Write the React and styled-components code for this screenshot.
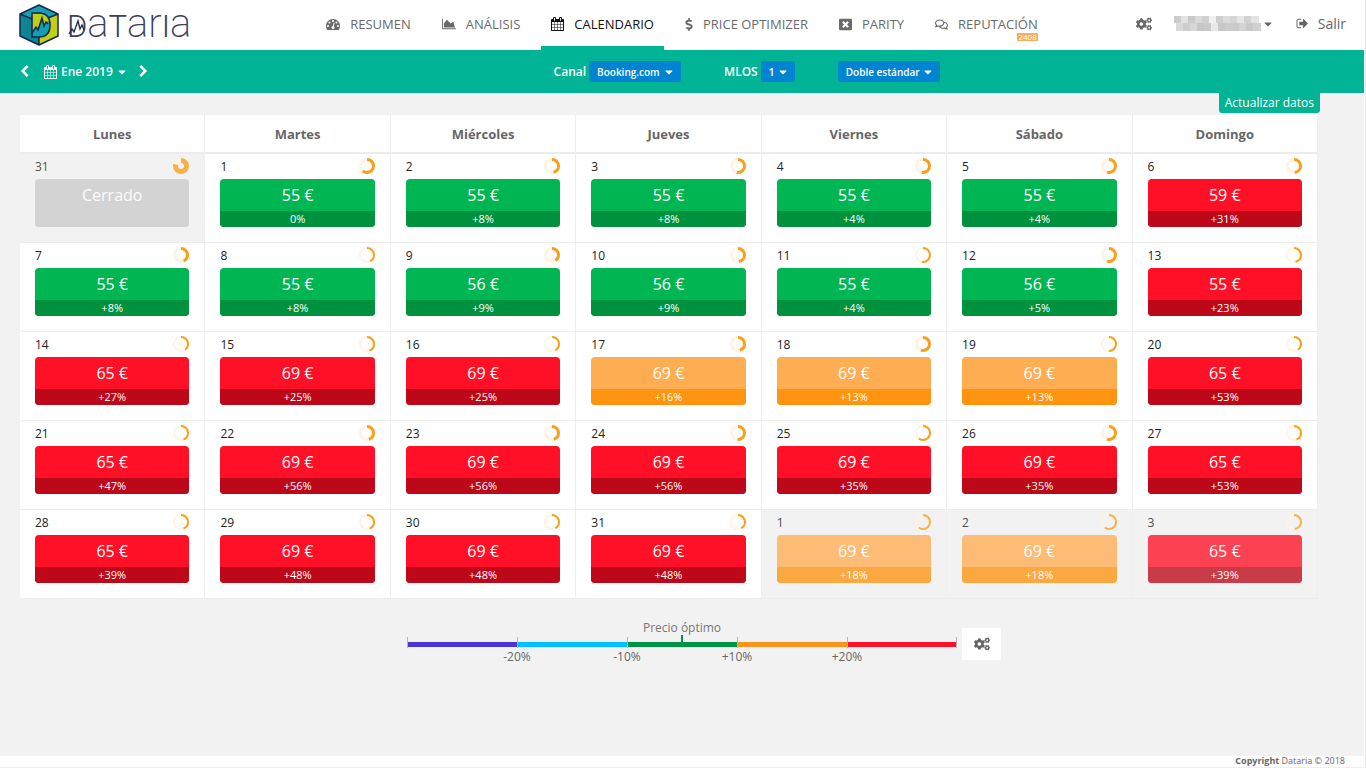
import React, { useState } from "react";
import styled, { createGlobalStyle } from "styled-components";
import {
  FaCaretDown,
  FaCogs,
  FaDollarSign,
  FaRegComments,
  FaWindowClose,
} from "react-icons/fa";

const weekDays = ["Lunes", "Martes", "Miércoles", "Jueves", "Viernes", "Sábado", "Domingo"];

// [day, price, difference, level, ring fill, ring thickness, other month]
const weeks = [
  [
    [31, null, null, "closed", 78, 5, true],
    [1, 55, "0%", "good", 60, 3],
    [2, 55, "+8%", "good", 45, 3],
    [3, 55, "+8%", "good", 52, 3],
    [4, 55, "+4%", "good", 52, 3],
    [5, 55, "+4%", "good", 54, 3],
    [6, 59, "+31%", "high", 47, 3],
  ],
  [
    [7, 55, "+8%", "good", 42, 3],
    [8, 55, "+8%", "good", 42, 2],
    [9, 56, "+9%", "good", 40, 3],
    [10, 56, "+9%", "good", 46, 3],
    [11, 55, "+4%", "good", 52, 2],
    [12, 56, "+5%", "good", 54, 3],
    [13, 55, "+23%", "high", 46, 2],
  ],
  [
    [14, 65, "+27%", "high", 40, 2],
    [15, 69, "+25%", "high", 44, 2],
    [16, 69, "+25%", "high", 42, 2],
    [17, 69, "+16%", "warn", 44, 3],
    [18, 69, "+13%", "warn", 54, 3],
    [19, 69, "+13%", "warn", 50, 2],
    [20, 65, "+53%", "high", 40, 2],
  ],
  [
    [21, 65, "+47%", "high", 44, 2],
    [22, 69, "+56%", "high", 44, 3],
    [23, 69, "+56%", "high", 44, 3],
    [24, 69, "+56%", "high", 50, 3],
    [25, 69, "+35%", "high", 60, 2],
    [26, 69, "+35%", "high", 54, 3],
    [27, 65, "+53%", "high", 44, 2],
  ],
  [
    [28, 65, "+39%", "high", 44, 2],
    [29, 69, "+48%", "high", 44, 2],
    [30, 69, "+48%", "high", 42, 2],
    [31, 69, "+48%", "high", 42, 2],
    [1, 69, "+18%", "warn", 60, 2, true],
    [2, 69, "+18%", "warn", 60, 2, true],
    [3, 65, "+39%", "high", 48, 2, true],
  ],
];

const levels = {
  good: { top: "#00b652", bottom: "#00913f" },
  warn: { top: "#ffad52", bottom: "#ff9410" },
  high: { top: "#ff1026", bottom: "#bd0819" },
  closed: { top: "#cbcbcb", bottom: "#cbcbcb" },
};

const scale = [
  { color: "#4b35d6", label: "-20%" },
  { color: "#00bfff", label: "-10%" },
  { color: "#009245", label: "+10%" },
  { color: "#f7931e", label: "+20%" },
  { color: "#fb1026", label: "" },
];

// grey levels of the masked user name, two rows of blocks
const mask = [
  ["#ccc", "#e2e2e2", "#c9c9c9", "#dadada", "#d0d0d0", "#f1f1f1", "#cfcfcf", "#dcdcdc", "#d5d5d5", "#e6e6e6", "#d2d2d2", "#e3e3e3"],
  ["#d9d9d9", "#cdcdcd", "#d6d6d6", "#c6c6c6", "#c9c9c9", "#e9e9e9", "#c8c8c8", "#cbcbcb", "#cacaca", "#d4d4d4", "#c9c9c9", "#d0d0d0"],
];

function DashboardIcon() {
  return (
    <svg viewBox="0 0 1792 1792" width="14" height="14" fill="currentColor" aria-hidden="true">
      <path d="M384 1152q0-53-37.5-90.5t-90.5-37.5-90.5 37.5-37.5 90.5 37.5 90.5 90.5 37.5 90.5-37.5 37.5-90.5zm192-448q0-53-37.5-90.5t-90.5-37.5-90.5 37.5-37.5 90.5 37.5 90.5 90.5 37.5 90.5-37.5 37.5-90.5zm428 481l101-382q6-26-7.5-48.5t-38.5-29.5-48 6.5-30 39.5l-101 382q-60 5-107 43.5t-63 98.5q-20 77 20 146t117 89 146-20 89-117q16-60-6-117t-72-91zm660-33q0-53-37.5-90.5t-90.5-37.5-90.5 37.5-37.5 90.5 37.5 90.5 90.5 37.5 90.5-37.5 37.5-90.5zm-640-640q0-53-37.5-90.5t-90.5-37.5-90.5 37.5-37.5 90.5 37.5 90.5 90.5 37.5 90.5-37.5 37.5-90.5zm448 192q0-53-37.5-90.5t-90.5-37.5-90.5 37.5-37.5 90.5 37.5 90.5 90.5 37.5 90.5-37.5 37.5-90.5zm320 448q0 261-141 483-19 29-54 29h-1402q-35 0-54-29-141-221-141-483 0-182 71-348t191-286 286-191 348-71 348 71 286 191 191 286 71 348z" />
    </svg>
  );
}

function AreaIcon() {
  return (
    <svg viewBox="0 0 2048 1792" width="14" height="12" fill="currentColor" aria-hidden="true">
      <path d="M2048 1536v128h-2048v-1536h128v1408h1920zm-384-1024l256 896h-1664v-576l448-576 576 576z" />
    </svg>
  );
}

function CalendarIcon() {
  return (
    <svg viewBox="64 0 1664 1792" width="13" height="14" fill="currentColor" aria-hidden="true">
      <path d="M192 1664h288v-288h-288v288zm352 0h320v-288h-320v288zm-352-352h288v-320h-288v320zm352 0h320v-320h-320v320zm-352-384h288v-288h-288v288zm736 736h320v-288h-320v288zm-384-736h320v-288h-320v288zm768 736h288v-288h-288v288zm-384-352h320v-320h-320v320zm-352-864v-288q0-13-9.5-22.5t-22.5-9.5h-64q-13 0-22.5 9.5t-9.5 22.5v288q0 13 9.5 22.5t22.5 9.5h64q13 0 22.5-9.5t9.5-22.5zm736 864h288v-320h-288v320zm-384-384h320v-288h-320v288zm384 0h288v-288h-288v288zm32-480v-288q0-13-9.5-22.5t-22.5-9.5h-64q-13 0-22.5 9.5t-9.5 22.5v288q0 13 9.5 22.5t22.5 9.5h64q13 0 22.5-9.5t9.5-22.5zm384-64v1280q0 52-38 90t-90 38h-1408q-52 0-90-38t-38-90v-1280q0-52 38-90t90-38h128v-96q0-66 47-113t113-47h64q66 0 113 47t47 113v96h384v-96q0-66 47-113t113-47h64q66 0 113 47t47 113v96h128q52 0 90 38t38 90z" />
    </svg>
  );
}

function SignOutIcon() {
  return (
    <svg viewBox="0 0 1792 1792" width="13" height="13" fill="currentColor" aria-hidden="true">
      <path d="M704 1440q0 4 1 20t.5 26.5-3 23.5-10 19.5-20.5 6.5h-320q-119 0-203.5-84.5t-84.5-203.5v-704q0-119 84.5-203.5t203.5-84.5h320q13 0 22.5 9.5t9.5 22.5q0 4 1 20t.5 26.5-3 23.5-10 19.5-20.5 6.5h-320q-66 0-113 47t-47 113v704q0 66 47 113t113 47h312l11.5 1 11.5 3 8 5.5 7 9 2 13.5zm928-544q0 26-19 45l-544 544q-19 19-45 19t-45-19-19-45v-288h-448q-26 0-45-19t-19-45v-384q0-26 19-45t45-19h448v-288q0-26 19-45t45-19 45 19l544 544q19 19 19 45z" />
    </svg>
  );
}

function ChevronIcon({ right }) {
  return (
    <svg viewBox="300 0 1200 1792" width="9" height="13" fill="currentColor" aria-hidden="true">
      <path
        d={
          right
            ? "M1363 877l-742 742q-19 19-45 19t-45-19l-166-166q-19-19-19-45t19-45l531-531-531-531q-19-19-19-45t19-45l166-166q19-19 45-19t45 19l742 742q19 19 19 45t-19 45z"
            : "M1427 301l-531 531 531 531q19 19 19 45t-19 45l-166 166q-19 19-45 19t-45-19l-742-742q-19-19-19-45t19-45l742-742q19-19 45-19t45 19l166 166q19 19 19 45t-19 45z"
        }
      />
    </svg>
  );
}

function CubeLogo() {
  return (
    <svg viewBox="0 0 42 42" width="42" height="42" aria-hidden="true">
      <path d="M21 1 40 10 21 19 2 10z" fill="#12a0b4" />
      <path d="M2 10 21 19V41L2 32z" fill="#0d8593" />
      <path d="M40 10 21 19V41L40 32z" fill="#c3cf14" />
      <path d="M14 10H21C26 10 29 12 30 15L28 18 26 22 24 14 20 26 18 23 14 29z" fill="#c3cf14" />
      <path d="M14 29 18 23 20 26 24 14 26 22 28 18 31 17C33 26 29 33 21 33H14z" fill="#12a0b4" />
      <path d="M14 9H21C29 9 32 14 32 21S29 33 21 33H14z" fill="none" stroke="#17274f" strokeWidth="1.6" />
      <path d="M14 29 18 23 20 26 24 14 26 22 28 18 30 20" fill="none" stroke="#17274f" strokeWidth="1.5" />
      <path d="M21 1 40 10V32L21 41 2 32V10zM2 10l12 5M40 10l-10 4M21 33v8" fill="none" stroke="#17274f" strokeWidth="1.5" strokeLinejoin="round" />
    </svg>
  );
}

function Ring({ value, thickness }) {
  const r = 8 - thickness / 2;
  const length = 2 * Math.PI * r;
  return (
    <svg viewBox="0 0 16 16" width="16" height="16" aria-hidden="true">
      <circle cx="8" cy="8" r={r} fill="none" stroke="#fff4e4" strokeWidth={thickness} />
      <circle
        cx="8"
        cy="8"
        r={r}
        fill="none"
        stroke="#f9a01b"
        strokeWidth={thickness}
        strokeDasharray={`${(length * value) / 100} ${length}`}
        transform="rotate(-90 8 8)"
      />
    </svg>
  );
}

function Day({ data }) {
  const [day, price, diff, level, fill, thickness, outside] = data;
  return (
    <Cell $outside={outside}>
      <DayContent $outside={outside}>
        <DayTop>
          <span>{day}</span>
          <Ring value={fill} thickness={thickness} />
        </DayTop>
        <Card $level={level}>
          <Price>{price ? `${price} €` : "Cerrado"}</Price>
          <Diff $level={level}>{diff}</Diff>
        </Card>
      </DayContent>
    </Cell>
  );
}

function Select({ id, options, width, label, plain }) {
  const [value, setValue] = useState(options[0]);
  return (
    <SelectWrap>
      <Dropdown
        id={id}
        aria-label={label}
        $width={width}
        $plain={plain}
        value={value}
        onChange={(e) => setValue(e.target.value)}
      >
        {options.map((o) => (
          <option key={o}>{o}</option>
        ))}
      </Dropdown>
      <FaCaretDown />
    </SelectWrap>
  );
}

function App() {
  return (
    <Page>
      <GlobalStyle />
      <Header>
        <Brand href="#" aria-label="Dataria">
          <CubeLogo />
          <Wordmark>
            <LetterD>
              D
              <svg viewBox="0 0 18 22" width="18" height="22" aria-hidden="true">
                <path d="M1 19 4 14 6 17 10 6 12 14 14 10 16 15" fill="none" stroke="#2c3050" strokeWidth="1.4" />
              </svg>
            </LetterD>
            <Tall>a</Tall>T<Tall>ar</Tall>I<Tall>a</Tall>
          </Wordmark>
        </Brand>
        <Nav>
          <NavLink href="#">
            <DashboardIcon />
            RESUMEN
          </NavLink>
          <NavLink href="#">
            <AreaIcon />
            ANÁLISIS
          </NavLink>
          <NavLink href="#" $active>
            <CalendarIcon />
            CALENDARIO
          </NavLink>
          <NavLink href="#">
            <DollarIcon />
            PRICE OPTIMIZER
          </NavLink>
          <NavLink href="#">
            <FaWindowClose size={13} />
            PARITY
          </NavLink>
          <NavLink href="#">
            <FaRegComments size={13} />
            REPUTACIÓN
            <Badge>2408</Badge>
          </NavLink>
        </Nav>
        <Account>
          <IconButton aria-label="Configuración">
            <FaCogs size={16} />
          </IconButton>
          <UserButton aria-label="Usuario">
            <svg viewBox="0 0 88 16" width="88" height="16" aria-hidden="true">
              {mask.map((row, y) =>
                row.map((c, x) => (
                  <rect key={`${x}-${y}`} x={x * 7 + y * 2} y={y * 7} width="8" height={y ? 8 : 7} fill={c} />
                ))
              )}
            </svg>
            <FaCaretDown size={12} />
          </UserButton>
          <Logout href="#">
            <SignOutIcon />
            Salir
          </Logout>
        </Account>
      </Header>

      <Toolbar>
        <Period>
          <IconButton aria-label="Mes anterior">
            <ChevronIcon />
          </IconButton>
          <Month>
            <CalendarIcon />
            <Select plain label="Mes" width={66} options={["Ene 2019", "Feb 2019"]} />
          </Month>
          <IconButton aria-label="Mes siguiente">
            <ChevronIcon right />
          </IconButton>
        </Period>
        <Filters>
          <Field>
            <label htmlFor="canal">Canal</label>
            <Select id="canal" width={92} options={["Booking.com", "Expedia"]} />
          </Field>
          <Field>
            <label htmlFor="mlos">MLOS</label>
            <Select id="mlos" width={34} options={["1", "2", "3"]} />
          </Field>
          <Select label="Habitación" width={102} options={["Doble estándar", "Individual"]} />
        </Filters>
      </Toolbar>

      <Main>
        <UpdateButton>Actualizar datos</UpdateButton>
        <Calendar>
          <thead>
            <tr>
              {weekDays.map((d) => (
                <HeadCell key={d}>{d}</HeadCell>
              ))}
            </tr>
          </thead>
          <tbody>
            {weeks.map((week, i) => (
              <tr key={i}>
                {week.map((data, j) => (
                  <Day key={j} data={data} />
                ))}
              </tr>
            ))}
          </tbody>
        </Calendar>

        <Legend>
          <Scale>
            <ScaleTitle>Precio óptimo</ScaleTitle>
            <Marker />
            <Bars>
              {scale.map((s) => (
                <Bar key={s.color} $color={s.color} />
              ))}
            </Bars>
            <Bars>
              {scale.map((s) => (
                <BarLabel key={s.color}>{s.label}</BarLabel>
              ))}
            </Bars>
          </Scale>
          <ScaleButton aria-label="Configurar rangos">
            <FaCogs size={16} />
          </ScaleButton>
        </Legend>
      </Main>

      <Footer>
        <b>Copyright</b> Dataria © 2018
      </Footer>
    </Page>
  );
}

export default App;

const GlobalStyle = createGlobalStyle`
  * {
    box-sizing: border-box;
  }
  body {
    margin: 0;
    background: #fff;
    color: #666;
    font-family: "Open Sans", sans-serif;
    font-size: 13px;
  }
  button,
  select {
    font-family: inherit;
    cursor: pointer;
  }
  svg {
    display: block;
    flex-shrink: 0;
  }
`;

const Page = styled.div`
  display: flex;
  flex-direction: column;
  min-height: 100vh;
  margin-right: 1px;
  border-right: 1px solid #fff;
  box-shadow: 1px 0 #e8e8e8;
`;

const Header = styled.header`
  display: grid;
  grid-template-columns: 1fr auto 1fr;
  height: 50px;
  padding: 0 18px;
  background: #fff;
`;

const Brand = styled.a`
  display: flex;
  align-items: center;
  gap: 7px;
  color: #3d405e;
  text-decoration: none;
`;

const Wordmark = styled.span`
  display: flex;
  align-items: baseline;
  font-family: Roboto, sans-serif;
  font-size: 31px;
  font-weight: 300;
  line-height: 38px;
`;

const LetterD = styled.span`
  position: relative;

  svg {
    position: absolute;
    left: 1px;
    top: 7px;
  }
`;

const Tall = styled.span`
  font-size: 40px;
  font-weight: 200;
`;

const Nav = styled.nav`
  display: flex;
  gap: 11px;
`;

const NavLink = styled.a`
  position: relative;
  display: flex;
  align-items: center;
  gap: 10px;
  padding: 2px 10px 0;
  border-bottom: 4px solid ${(props) => (props.$active ? "#00b495" : "transparent")};
  color: ${(props) => (props.$active ? "#111" : "#6a6a6a")};
  font-size: 13px;
  line-height: 14px;
  text-decoration: none;
`;

const DollarIcon = styled(FaDollarSign)`
  width: 8px;
  height: 13px;
`;

const Badge = styled.span`
  position: absolute;
  right: 10px;
  bottom: 5px;
  padding: 0 1px;
  border-radius: 1px;
  background: #f9ac59;
  color: #fff;
  font-size: 8px;
  line-height: 8px;
`;

const Account = styled.div`
  display: flex;
  align-items: center;
  justify-content: flex-end;
  gap: 22px;
  padding-bottom: 3px;
  color: #666;
`;

const IconButton = styled.button`
  padding: 0;
  border: 0;
  background: none;
  color: inherit;
`;

const UserButton = styled(IconButton)`
  display: flex;
  align-items: center;
`;

const Logout = styled.a`
  display: flex;
  align-items: center;
  gap: 9px;
  color: #666;
  font-size: 14px;
  text-decoration: none;
`;

const Toolbar = styled.div`
  display: grid;
  grid-template-columns: 2fr 3fr;
  align-items: center;
  height: 43px;
  padding: 0 20px;
  background: #00b495;
  color: #fff;
  font-weight: 600;
`;

const Period = styled.div`
  display: flex;
  align-items: center;
  gap: 12px;
`;

const Month = styled.div`
  display: flex;
  align-items: center;
  gap: 4px;
  padding-left: 3px;
`;

const Filters = styled.div`
  display: flex;
  align-items: center;
  gap: 43px;
  padding-left: 4px;
`;

const Field = styled.div`
  display: flex;
  align-items: center;
  gap: 3px;
  font-size: 12px;
`;

const SelectWrap = styled.div`
  position: relative;
  display: flex;
  align-items: center;

  svg {
    position: absolute;
    right: 7px;
    width: 10px;
    height: 12px;
    pointer-events: none;
  }
`;

const Dropdown = styled.select`
  appearance: none;
  width: ${(props) => props.$width}px;
  height: 21px;
  padding: 0 0 0 ${(props) => (props.$plain ? "0" : "8px")};
  border: 0;
  border-radius: 3px;
  background: ${(props) => (props.$plain ? "transparent" : "#0084d1")};
  color: #fff;
  font-size: ${(props) => (props.$plain ? "12px" : "10px")};
  font-weight: 600;

  & + svg {
    right: ${(props) => (props.$plain ? "0" : "7px")};
  }
`;

const Main = styled.main`
  display: flex;
  flex: 1;
  flex-direction: column;
  background: #f2f2f2;
`;

const UpdateButton = styled.button`
  align-self: flex-end;
  height: 20px;
  margin: 0 44px 2px 0;
  padding: 0 6px;
  border: 0;
  border-radius: 0 0 3px 3px;
  background: #00b495;
  color: #fff;
  font-size: 12px;
  line-height: 18px;
`;

const Calendar = styled.table`
  width: calc(100% - 66px);
  margin-left: 20px;
  border-collapse: separate;
  border-spacing: 0;
  table-layout: fixed;
`;

const HeadCell = styled.th`
  height: 39px;
  padding: 1px 0 0;
  border-right: 1px solid #efefef;
  border-bottom: 2px solid #ececec;
  background: #fff;
  font-size: 13px;
  font-weight: 700;
`;

const Cell = styled.td`
  height: 89px;
  padding: 4px 15px 0;
  border-right: 1px solid #efefef;
  border-bottom: 1px solid #ececec;
  background: ${(props) => (props.$outside ? "#f2f2f2" : "#fff")};
  vertical-align: top;
`;

const DayContent = styled.div`
  opacity: ${(props) => (props.$outside ? 0.78 : 1)};
`;

const DayTop = styled.div`
  display: flex;
  justify-content: space-between;
  height: 21px;
  color: #222;
  font-size: 12px;
  line-height: 17px;
`;

const Card = styled.div`
  overflow: hidden;
  border-radius: 4px;
  background: ${(props) => levels[props.$level].top};
  color: #fff;
  text-align: center;
`;

const Price = styled.div`
  height: 32px;
  font-size: 16px;
  font-weight: 500;
  line-height: 32px;
`;

const Diff = styled.div`
  height: 16px;
  background: ${(props) => levels[props.$level].bottom};
  font-size: 11px;
  font-weight: 500;
  line-height: 16px;
`;

const Legend = styled.div`
  display: grid;
  grid-template-columns: 1fr minmax(0, 550px) 1fr;
  align-items: center;
  gap: 5px;
  margin-top: 22px;
`;

const Scale = styled.div`
  grid-column: 2;
  text-align: center;
  font-size: 12px;
`;

const ScaleTitle = styled.div`
  color: #777;
  line-height: 14px;
`;

const Marker = styled.div`
  width: 2px;
  height: 7px;
  margin: 0 auto;
  background: #009245;
`;

const Bars = styled.div`
  display: grid;
  grid-template-columns: repeat(5, 1fr);
`;

const Bar = styled.div`
  position: relative;
  height: 5px;
  background: ${(props) => props.$color};

  &::before,
  &:last-child::after {
    content: "";
    position: absolute;
    top: -5px;
    left: 0;
    width: 1px;
    height: 11px;
    background: #b5b5b5;
  }

  &:last-child::after {
    right: 0;
    left: auto;
  }
`;

const BarLabel = styled.div`
  display: flex;
  justify-content: center;
  width: 200%;
  line-height: 20px;
`;

const ScaleButton = styled.button`
  display: flex;
  align-items: center;
  justify-content: center;
  width: 39px;
  height: 32px;
  padding: 0;
  border: 0;
  border-radius: 2px;
  background: #fff;
  color: #666;
`;

const Footer = styled.footer`
  height: 12px;
  padding-right: 19px;
  border-bottom: 1px solid #eee;
  background: #fff;
  font-size: 9px;
  line-height: 10px;
  text-align: right;
`;
